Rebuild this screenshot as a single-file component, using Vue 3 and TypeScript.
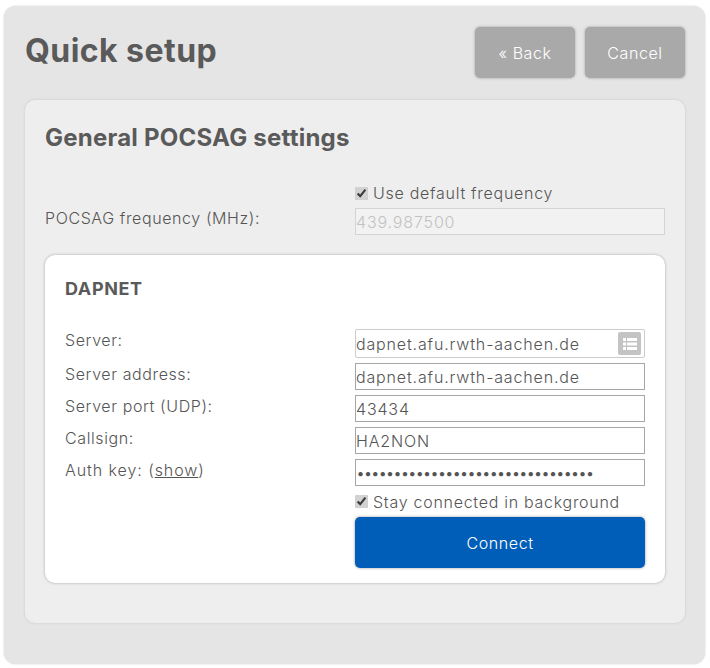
<script setup lang="ts">
import { ref } from 'vue'

const useDefault = ref(true)
const stayConnected = ref(true)

const fields = [
  { label: 'Server address:', value: 'dapnet.afu.rwth-aachen.de' },
  { label: 'Server port (UDP):', value: '43434' },
  { label: 'Callsign:', value: 'HA2NON' },
]
</script>

<template>
  <div class="page">
    <div class="wizard">
      <header class="head">
        <h1>Quick setup</h1>
        <div class="actions">
          <button class="btn">« Back</button>
          <button class="btn">Cancel</button>
        </div>
      </header>

      <section class="panel">
        <h2>General POCSAG settings</h2>

        <div class="freq">
          <label class="freq-label">POCSAG frequency (MHz):</label>
          <div class="freq-field">
            <label class="check"><input v-model="useDefault" type="checkbox"> Use default frequency</label>
            <input class="text disabled" type="text" value="439.987500" disabled>
          </div>
        </div>

        <div class="card">
          <h3>DAPNET</h3>

          <div class="row first">
            <label>Server:</label>
            <div class="select">
              <span>dapnet.afu.rwth-aachen.de</span>
              <span class="select-btn">
                <svg width="14" height="14" viewBox="0 0 14 14" fill="#fff">
                  <rect x="0" y="1" width="3" height="3" />
                  <rect x="4" y="1" width="10" height="3" />
                  <rect x="0" y="5.5" width="3" height="3" />
                  <rect x="4" y="5.5" width="10" height="3" />
                  <rect x="0" y="10" width="3" height="3" />
                  <rect x="4" y="10" width="10" height="3" />
                </svg>
              </span>
            </div>
          </div>

          <div v-for="f in fields" :key="f.label" class="row">
            <label>{{ f.label }}</label>
            <input class="text" type="text" :value="f.value">
          </div>

          <div class="row auth">
            <label>Auth key: (<a href="#">show</a>)</label>
            <input class="text pass" type="password" value="abcdefghijklmnopqrstuvwxyz012345">
          </div>

          <div class="below">
            <label class="check"><input v-model="stayConnected" type="checkbox"> Stay connected in background</label>
            <button class="connect">Connect</button>
          </div>
        </div>
      </section>
    </div>
  </div>
</template>

<style>
html, body {
  margin: 0;
  background: #fff;
}
</style>

<style scoped>
.page {
  width: 710px;
  height: 668px;
  box-sizing: border-box;
  padding: 6px 5px 4px 4px;
  font-family: Inter, "Open Sans", sans-serif;
  font-size: 16px;
  font-weight: 300;
  letter-spacing: .6px;
  color: #555;
}

.wizard {
  height: 100%;
  box-sizing: border-box;
  padding: 21px 20px 41px 21px;
  background: #e5e5e5;
  border-radius: 12px;
  box-shadow: 0 0 2px rgba(0, 0, 0, .2);
}

.head {
  display: flex;
  justify-content: space-between;
  height: 73px;
}

h1 {
  margin: 0;
  font-size: 32px;
  line-height: 48px;
  font-weight: 700;
  letter-spacing: .45px;
  color: #5a5a5a;
}

.actions {
  display: flex;
  gap: 10px;
}

.btn {
  width: 100px;
  height: 51px;
  border: 0;
  border-radius: 5px;
  background: #a9a9a9;
  color: #fff;
  font: inherit;
  letter-spacing: inherit;
  box-shadow: 0 0 3px rgba(0, 0, 0, .3);
}

.panel {
  height: 523px;
  box-sizing: border-box;
  padding: 20px;
  background: #eee;
  border-radius: 10px;
  box-shadow: 0 0 3px rgba(0, 0, 0, .12);
}

h2 {
  margin: 0;
  font-size: 24px;
  line-height: 36px;
  font-weight: 700;
  letter-spacing: .23px;
  color: #5a5a5a;
}

h3 {
  margin: 0;
  font-size: 18px;
  line-height: 28px;
  font-weight: 700;
  letter-spacing: .6px;
  color: #5a5a5a;
}

.freq {
  display: flex;
  margin-top: 24px;
  height: 75px;
}

.freq-label,
.row label {
  width: 310px;
  flex: none;
}

.freq-label {
  align-self: flex-start;
  margin-top: 26px;
  line-height: 24px;
}

.freq-field {
  flex: 1;
  display: flex;
  flex-direction: column;
}

.check {
  display: flex;
  align-items: center;
  gap: 5px;
  height: 26px;
  letter-spacing: .72px;
}

.check input {
  width: 13px;
  height: 13px;
  margin: 0;
  accent-color: #d2d2d2;
}

.text {
  box-sizing: border-box;
  flex: 1;
  min-width: 0;
  height: 27px;
  padding: 0;
  border: 1px solid #a6a6a6;
  background: #fff;
  color: #555;
  font: inherit;
  letter-spacing: .85px;
  outline: none;
}

.text.pass {
  letter-spacing: -1.6px;
}

.text.disabled {
  flex: none;
  width: 100%;
  border-color: #d4d4d4;
  background: #f2f2f2;
  color: #c2c2c2;
  margin-top: 2px;
}

.card {
  height: 328px;
  box-sizing: border-box;
  padding: 20px;
  background: #fff;
  border-radius: 10px;
  box-shadow: 0 0 3px rgba(0, 0, 0, .3);
}

.row {
  display: flex;
  margin-top: 5px;
}

.row.first {
  margin-top: 26px;
}

.row label {
  width: 290px;
  line-height: 22px;
}

.row.auth label {
  letter-spacing: .93px;
}

.row a {
  color: inherit;
}

.select {
  flex: 1;
  box-sizing: border-box;
  height: 29px;
  display: flex;
  align-items: center;
  justify-content: space-between;
  padding-right: 3px;
  border: 1px solid #ccc;
  border-radius: 2px;
  letter-spacing: .85px;
}

.select-btn {
  width: 23px;
  height: 23px;
  display: flex;
  align-items: center;
  justify-content: center;
  background: #c4c4c4;
  border-radius: 2px;
}

.below {
  margin: 3px 0 0 290px;
}

.below .check {
  height: 25px;
}

.connect {
  display: block;
  width: 100%;
  height: 51px;
  margin-top: 3px;
  border: 0;
  border-radius: 5px;
  background: #005eb8;
  color: #fff;
  font: inherit;
  letter-spacing: inherit;
  box-shadow: 0 0 3px rgba(0, 0, 0, .4);
}
</style>
